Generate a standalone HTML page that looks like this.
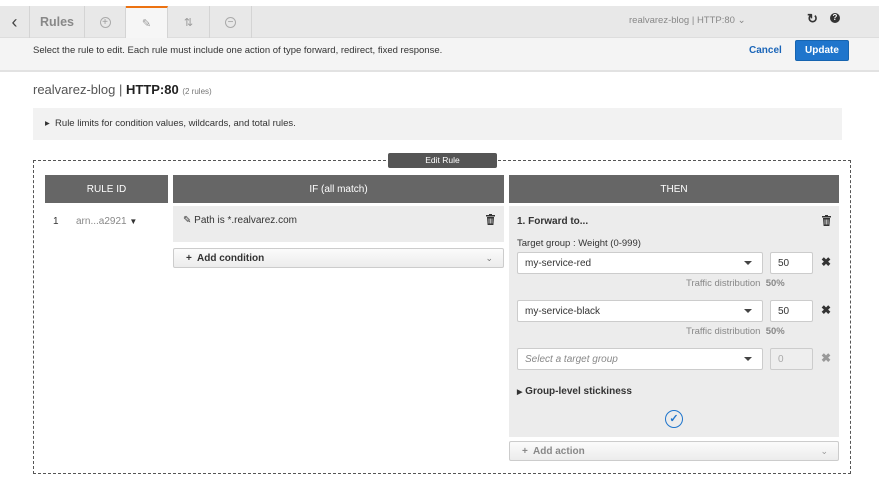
<!DOCTYPE html>
<html><head><style>
*{box-sizing:border-box;margin:0;padding:0}
body{width:879px;height:481px;background:#fff;font-family:"Liberation Sans",Arial,sans-serif;position:relative;overflow:hidden;color:#333}
.a{position:absolute}
.top{left:0;top:6px;width:879px;height:32px;background:#e8e8e8;border-bottom:1px solid #ddd}
.tab{top:6px;height:32px;border-right:1px solid #d4d4d4;display:flex;align-items:center;justify-content:center;color:#999;font-size:13px}
.bar2{left:0;top:38px;width:879px;height:34px;background:#f4f4f4;border-bottom:2px solid #e2e2e2}
.hdr{top:175px;height:28px;background:#666;color:#fff;font-size:10px;display:flex;align-items:center;justify-content:center}
.sel{height:22px;background:#fff;border:1px solid #ccc;border-radius:2px;font-size:10px;padding-left:7px;display:flex;align-items:center}
.sel:after{content:"";position:absolute;right:10px;top:8px;border:4px solid transparent;border-top:4px solid #444;border-bottom:0}
.num{height:22px;background:#fff;border:1px solid #ccc;border-radius:2px;font-size:10px;padding-left:7px;display:flex;align-items:center;width:43px}
.x{font-size:12px;font-weight:bold;color:#333}
.dist{font-size:9.5px;color:#888}
.btn{height:20px;background:linear-gradient(#fbfbfb,#ececec);border:1px solid #ccc;border-radius:2px;font-size:10px;font-weight:bold;display:flex;align-items:center;padding-left:12px}
</style></head><body>
<div class="a top"></div>
<div class="a tab" style="left:0;width:30px;color:#444;font-size:18px">&#8249;</div>
<div class="a tab" style="left:30px;width:55px;font-weight:bold;font-size:12.5px;color:#888">Rules</div>
<div class="a tab" style="left:85px;width:41px"><span style="display:inline-block;width:11px;height:11px;border:1px solid #aaa;border-radius:50%;font-size:10px;line-height:9px;text-align:center">+</span></div>
<div class="a tab" style="left:126px;width:42px;background:#f6f6f6;border-top:2px solid #ec7211;font-size:11px;color:#999">&#9998;</div>
<div class="a tab" style="left:168px;width:42px;font-size:11px">&#8645;</div>
<div class="a tab" style="left:210px;width:42px"><span style="display:inline-block;width:11px;height:11px;border:1px solid #aaa;border-radius:50%;font-size:10px;line-height:9px;text-align:center">−</span></div>
<div class="a" style="left:629px;top:15px;font-size:9.5px;color:#888">realvarez-blog | HTTP:80 &#8964;</div>
<div class="a" style="left:807px;top:11px;font-size:13px;font-weight:bold;color:#333">&#8635;</div>
<div class="a" style="left:830px;top:13px;width:10px;height:10px;border-radius:50%;background:#333;color:#fff;font-size:8px;font-weight:bold;text-align:center;line-height:10px">?</div>
<div class="a bar2"></div>
<div class="a" style="left:33px;top:45px;font-size:9.5px;color:#333">Select the rule to edit. Each rule must include one action of type forward, redirect, fixed response.</div>
<div class="a" style="left:749px;top:45px;font-size:10px;font-weight:bold;color:#1a65b8">Cancel</div>
<div class="a" style="left:795px;top:40px;width:54px;height:21px;background:#1f75cc;border:1px solid #1664b0;border-radius:2px;color:#fff;font-size:10px;font-weight:bold;text-align:center;line-height:19px">Update</div>
<div class="a" style="left:33px;top:82px;font-size:13px;color:#555">realvarez-blog | <b style="color:#222">HTTP:80</b> <span style="font-size:8px;color:#777">(2 rules)</span></div>
<div class="a" style="left:33px;top:108px;width:809px;height:32px;background:#f2f2f2;font-size:9.5px;padding:10px 0 0 12px">&#9656;&nbsp; Rule limits for condition values, wildcards, and total rules.</div>
<div class="a" style="left:33px;top:160px;width:818px;height:314px;border:1px dashed #555"></div>
<div class="a" style="left:388px;top:153px;width:109px;height:15px;background:#555;border-radius:2px;color:#fff;font-size:8.5px;text-align:center;line-height:15px">Edit Rule</div>
<div class="a hdr" style="left:45px;width:123px">RULE ID</div>
<div class="a hdr" style="left:173px;width:331px">IF (all match)</div>
<div class="a hdr" style="left:509px;width:330px">THEN</div>
<div class="a" style="left:53px;top:216px;font-size:10px;color:#333">1</div>
<div class="a" style="left:76px;top:216px;font-size:10px;color:#888">arn...a2921 <span style="color:#333;font-size:8px">&#9660;</span></div>
<div class="a" style="left:173px;top:206px;width:331px;height:36px;background:#ececec"></div>
<div class="a" style="left:183px;top:215px;font-size:10px;color:#333">&#9998; Path is *.realvarez.com</div>
<svg class="a" style="left:486px;top:214px" width="9" height="11" viewBox="0 0 9 11"><rect x="0" y="1" width="9" height="1.5" fill="#333"/><rect x="3" y="0" width="3" height="1.5" fill="#333"/><path d="M1 3h7l-.6 8H1.6z" fill="#333"/><path d="M3 4.5v5M4.5 4.5v5M6 4.5v5" stroke="#ececec" stroke-width=".7"/></svg>
<div class="a btn" style="left:173px;top:248px;width:331px">+&nbsp; Add condition<span style="position:absolute;right:10px;font-weight:normal;color:#777;font-size:9px">&#8964;</span></div>
<div class="a" style="left:509px;top:206px;width:330px;height:231px;background:#ececec"></div>
<div class="a" style="left:517px;top:216px;font-size:10px;font-weight:bold">1. Forward to...</div>
<svg class="a" style="left:822px;top:215px" width="9" height="11" viewBox="0 0 9 11"><rect x="0" y="1" width="9" height="1.5" fill="#333"/><rect x="3" y="0" width="3" height="1.5" fill="#333"/><path d="M1 3h7l-.6 8H1.6z" fill="#333"/><path d="M3 4.5v5M4.5 4.5v5M6 4.5v5" stroke="#ececec" stroke-width=".7"/></svg>
<div class="a" style="left:517px;top:238px;font-size:9.5px">Target group : Weight (0-999)</div>
<div class="a sel" style="left:517px;top:252px;width:246px">my-service-red</div>
<div class="a num" style="left:770px;top:252px">50</div>
<div class="a x" style="left:821px;top:255px">&#10006;</div>
<div class="a dist" style="left:686px;top:278px">Traffic distribution&nbsp; <b>50%</b></div>
<div class="a sel" style="left:517px;top:300px;width:246px">my-service-black</div>
<div class="a num" style="left:770px;top:300px">50</div>
<div class="a x" style="left:821px;top:303px">&#10006;</div>
<div class="a dist" style="left:686px;top:326px">Traffic distribution&nbsp; <b>50%</b></div>
<div class="a sel" style="left:517px;top:348px;width:246px;color:#888;font-style:italic">Select a target group</div>
<div class="a num" style="left:770px;top:348px;background:#eee;color:#aaa">0</div>
<div class="a x" style="left:821px;top:351px;color:#999">&#10006;</div>
<div class="a" style="left:517px;top:386px;font-size:10px;font-weight:bold"><span style="font-size:7px">&#9654;</span> Group-level stickiness</div>
<div class="a" style="left:665px;top:410px;width:18px;height:18px;border:1.5px solid #1f75cc;border-radius:50%;color:#1f75cc;font-size:11px;text-align:center;line-height:16px;font-weight:bold">&#10003;</div>
<div class="a btn" style="left:509px;top:441px;width:330px;color:#888">+&nbsp; Add action<span style="position:absolute;right:10px;font-weight:normal;color:#999;font-size:9px">&#8964;</span></div>
</body></html>
